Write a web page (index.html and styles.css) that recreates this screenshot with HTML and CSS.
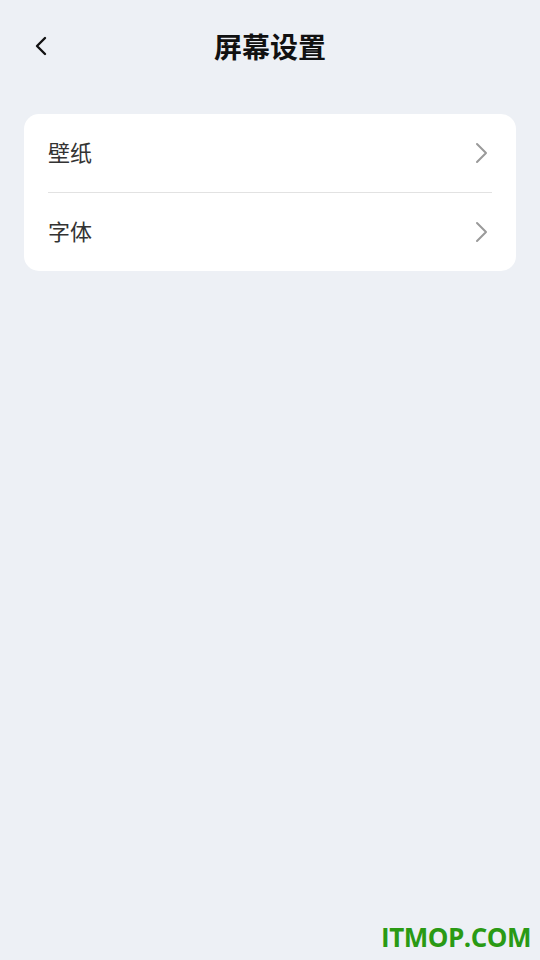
FILE: index.html
```html
<!DOCTYPE html>
<html lang="zh-CN">
<head>
    <meta charset="UTF-8">
    <meta name="viewport" content="width=device-width, initial-scale=1.0">
    <title>屏幕设置</title>
    <link rel="stylesheet" href="styles.css">
</head>
<body>

    <div class="page">
        <div class="header">
            <button class="back">
                <svg width="14" height="20" viewBox="0 0 14 20">
                    <path d="M11 2 L3 10 L11 18" fill="none" stroke="#111" stroke-width="2.4" stroke-linecap="round" stroke-linejoin="round"/>
                </svg>
            </button>
            <h1 class="title">屏幕设置</h1>
        </div>

        <div class="card">
            <div class="row">
                <span class="label">壁纸</span>
                <svg class="arrow" width="16" height="22" viewBox="0 0 16 22">
                    <path d="M3 2 L12 11 L3 20" fill="none" stroke="#9a9a9a" stroke-width="2" stroke-linecap="round" stroke-linejoin="round"/>
                </svg>
            </div>
            <div class="row">
                <span class="label">字体</span>
                <svg class="arrow" width="16" height="22" viewBox="0 0 16 22">
                    <path d="M3 2 L12 11 L3 20" fill="none" stroke="#9a9a9a" stroke-width="2" stroke-linecap="round" stroke-linejoin="round"/>
                </svg>
            </div>
        </div>

        <div class="watermark">ITMOP.COM</div>
    </div>

</body>
</html>
```

FILE: styles.css
```css
body {
    margin: 0;
    background-color: #edf0f5;
    font-family: "Noto Sans CJK SC", "Noto Sans", sans-serif;
}

.page {
    height: 960px;
    display: flex;
    flex-direction: column;
    padding: 0 24px;
    box-sizing: border-box;
}

.header {
    height: 92px;
    display: flex;
    align-items: center;
    justify-content: center;
    position: relative;
}

.back {
    position: absolute;
    left: 10px;
    top: 36px;
    background: none;
    border: none;
    padding: 0;
    width: 14px;
    height: 20px;
    cursor: pointer;
}

.back svg {
    display: block;
}

.title {
    margin: 0 0 1px;
    font-size: 28px;
    font-weight: 700;
    color: #111;
}

.card {
    margin-top: 22px;
    background-color: #fff;
    border-radius: 15px;
    padding: 0 24px;
}

.row {
    height: 78px;
    display: flex;
    align-items: center;
    justify-content: space-between;
}

.row + .row {
    border-top: 1px solid #e2e2e2;
}

.label {
    font-size: 22px;
    color: #333;
    padding-bottom: 4px;
}

.arrow {
    margin-right: 2px;
}

.watermark {
    margin-top: auto;
    margin-bottom: 5px;
    align-self: flex-end;
    margin-right: -15px;
    color: #2a9a14;
    font-family: "Open Sans", "Liberation Sans", sans-serif;
    font-weight: 700;
    font-size: 26px;
    letter-spacing: -0.5px;
}
```
